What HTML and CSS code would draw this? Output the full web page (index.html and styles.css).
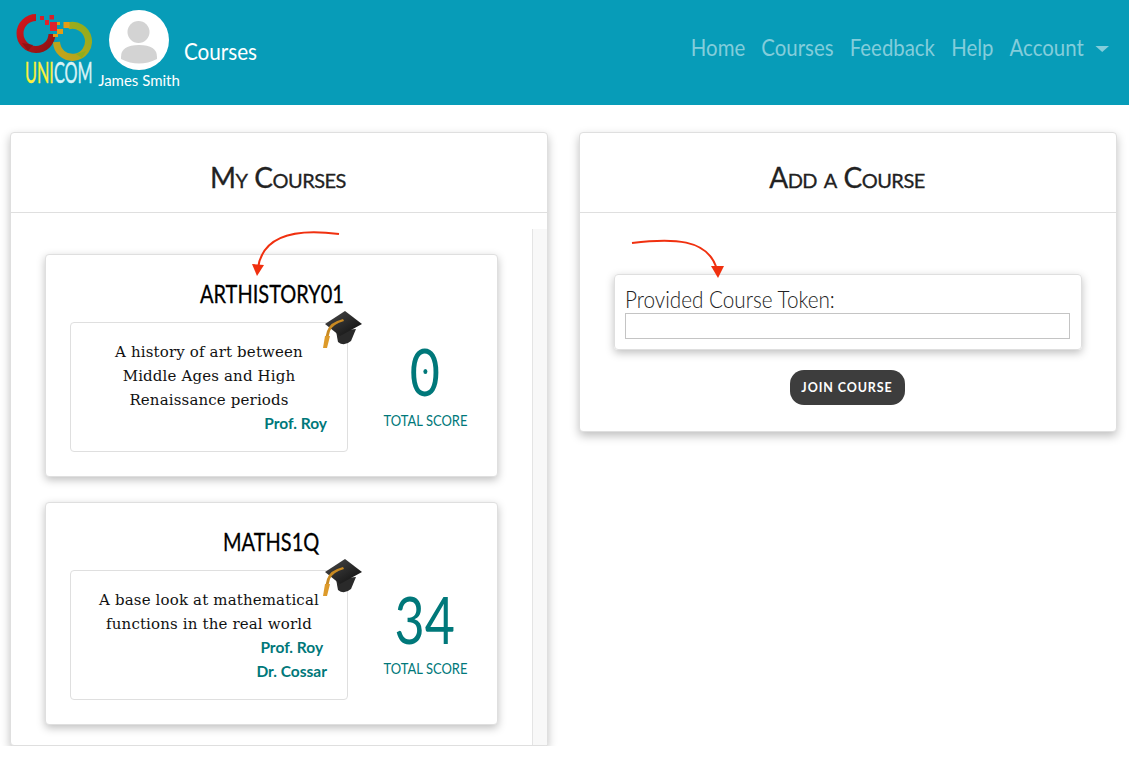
FILE: index.html
```html
<!DOCTYPE html>
<html lang="en">
<head>
    <meta charset="UTF-8">
    <title>Courses</title>
    <link rel="stylesheet" href="styles.css">
</head>
<body>

    <svg class="defs" width="0" height="0">
        <defs>
            <linearGradient id="ring-red" x1="0" y1="0" x2="1" y2="1">
                <stop offset="0" stop-color="#d5161c"/>
                <stop offset="1" stop-color="#8c1414"/>
            </linearGradient>
            <linearGradient id="ring-green" x1="0" y1="1" x2="1" y2="0">
                <stop offset="0" stop-color="#c9a21c"/>
                <stop offset="1" stop-color="#8fae1c"/>
            </linearGradient>
            <linearGradient id="hat-top" x1="0" y1="0" x2="1" y2="1">
                <stop offset="0" stop-color="#4a4a4a"/>
                <stop offset="1" stop-color="#0c0c0c"/>
            </linearGradient>
            <symbol id="hat" viewBox="0 0 40 40">
                <path d="M13 22 L15 33 Q21 38 28 32 L33 20 Z" fill="#2a2a2a"/>
                <path d="M2 15 L22 2 L39 15 L17 27 Z" fill="url(#hat-top)"/>
                <path d="M21 12 Q10 15 7 22 L5 30 L2 30 L4 22 Q7 13 20 10 Z" fill="#c98a22"/>
                <path d="M0 39 L2 27 L7 27 L4 39 Z" fill="#dd9a2a"/>
            </symbol>
        </defs>
    </svg>

    <nav class="navbar">
        <div class="logo">
            <svg width="76" height="50" viewBox="0 0 76 50">
                <path d="M20 4.5 A16 16 0 1 0 36 21" fill="none" stroke="url(#ring-red)" stroke-width="7"/>
                <path d="M6 30 L17 32 L12 38 Z" fill="#8c1414"/>
                <path d="M52 13 A16 16 0 1 1 40.5 29" fill="none" stroke="url(#ring-green)" stroke-width="7"/>
                <path d="M70 38 L60 41 L66 45 Z" fill="#8fae1c"/>
                <rect x="24" y="3" width="4" height="4" fill="#d5202a"/>
                <rect x="33.5" y="2" width="4.5" height="4.5" fill="#d5202a"/>
                <rect x="29" y="7" width="4" height="5" fill="#e0242c"/>
                <rect x="34" y="9" width="7" height="9" fill="#e0242c"/>
                <rect x="41" y="9" width="3" height="3" fill="#e59d14"/>
                <rect x="47.5" y="9" width="6" height="6" fill="#e59d14"/>
                <rect x="41" y="16" width="6" height="5" fill="#e59d14"/>
                <rect x="37" y="21" width="5" height="3" fill="#e59d14"/>
            </svg>
            <div class="logo-text"><span class="logo-uni">UNI</span>COM</div>
        </div>

        <div class="user">
            <div class="avatar">
                <svg width="60" height="60" viewBox="0 0 60 60">
                    <circle cx="30" cy="30" r="30" fill="#fff"/>
                    <circle cx="29.5" cy="22" r="11" fill="#d3d3d3"/>
                    <path d="M12 47 Q12 35 30 35 Q48 35 48 47 L48 49 Q30 58 12 49 Z" fill="#d3d3d3"/>
                </svg>
            </div>
            <div class="user-name">James Smith</div>
        </div>

        <div class="page-title">Courses</div>

        <ul class="nav-links">
            <li>Home</li>
            <li>Courses</li>
            <li>Feedback</li>
            <li>Help</li>
            <li class="dropdown">Account</li>
        </ul>
    </nav>

    <main class="columns">
        <section class="panel panel-courses">
            <h2 class="panel-title">My Courses</h2>
            <div class="scroll-area">
                <div class="course-list">
                    <article class="course">
                        <h3 class="course-code"><span>ARTHISTORY01</span></h3>
                        <div class="course-body">
                            <div class="course-info">
                                <svg class="hat"><use href="#hat"/></svg>
                                <p>A history of art between Middle Ages and High Renaissance periods</p>
                                <div class="teachers">
                                    <div>Prof. Roy</div>
                                </div>
                            </div>
                            <div class="score">
                                <div class="score-value"><span class="score-zero">0</span></div>
                                <div class="score-label">TOTAL SCORE</div>
                            </div>
                        </div>
                    </article>

                    <article class="course">
                        <h3 class="course-code"><span>MATHS1Q</span></h3>
                        <div class="course-body">
                            <div class="course-info">
                                <svg class="hat"><use href="#hat"/></svg>
                                <p>A base look at mathematical functions in the real world</p>
                                <div class="teachers">
                                    <div>Prof. Roy</div>
                                    <div>Dr. Cossar</div>
                                </div>
                            </div>
                            <div class="score">
                                <div class="score-value"><span>34</span></div>
                                <div class="score-label">TOTAL SCORE</div>
                            </div>
                        </div>
                    </article>
                </div>
                <div class="scroll-track"></div>
            </div>
            <svg class="arrow arrow-left" width="90" height="48" viewBox="0 0 90 48">
                <path d="M88 4 C50 -1 12 2 7 38" fill="none" stroke="#f0300f" stroke-width="2"/>
                <path d="M1 34 L13 35 L6 46 Z" fill="#f0300f"/>
            </svg>
        </section>

        <section class="panel panel-add">
            <h2 class="panel-title">Add a Course</h2>
            <div class="add-body">
                <form class="token-box">
                    <label for="token">Provided Course Token:</label>
                    <input type="text" id="token" name="token">
                </form>
                <button class="join-btn" type="button">JOIN COURSE</button>
            </div>
            <svg class="arrow arrow-right" width="95" height="42" viewBox="0 0 95 42">
                <path d="M1 5 C40 0 78 0 86 32" fill="none" stroke="#f0300f" stroke-width="2"/>
                <path d="M80 28 L93 28 L87 40 Z" fill="#f0300f"/>
            </svg>
        </section>
    </main>

</body>
</html>
```

FILE: styles.css
```css
* { box-sizing: border-box; }
body { margin: 0; background: #fff; font-family: "Lato", sans-serif; color: #212529; }
.defs { position: absolute; }

/* top bar */
.navbar { display: flex; align-items: flex-start; height: 105px; background: #079cb8; padding: 13px 20px 0 16px; }
.logo { width: 76px; flex: none; }
.logo svg { display: block; }
.logo-text { width: 112px; margin-left: 9px; margin-top: -3px; font-size: 28px; line-height: 24px; color: #d9f3f6; -webkit-text-stroke: 0.4px #d9f3f6; transform: scaleX(0.58); transform-origin: left; white-space: nowrap; }
.logo-uni { color: #fdf03c; -webkit-text-stroke: 0.4px #fdf03c; }
.user { width: 100px; flex: none; margin: -3px 0 0 -3px; display: flex; flex-direction: column; align-items: center; }
.avatar { height: 60px; }
.avatar svg { display: block; }
.user-name { font-size: 15px; line-height: 20px; color: #fff; white-space: nowrap; }
.page-title { margin: 23px 0 0 -5px; font-size: 24px; line-height: 30px; color: #fff; transform: scaleX(0.86); transform-origin: left; }
.nav-links { display: flex; gap: 19px; list-style: none; margin: 19px 0 0 auto; padding: 0; font-size: 24px; line-height: 30px; color: #83cddb; transform: scaleX(0.85); transform-origin: right; }
.dropdown::after { content: ""; display: inline-block; margin-left: 14px; vertical-align: 4px; border-top: 6px solid #83cddb; border-left: 8px solid transparent; border-right: 8px solid transparent; }

/* panels */
.columns { display: flex; align-items: flex-start; gap: 31px; padding: 27px 12px 0 10px; }
.panel { position: relative; width: 538px; background: #fff; border: 1px solid #dfdfdf; border-radius: 4px; box-shadow: 0 4px 10px rgba(0, 0, 0, 0.25); }
.panel-title { margin: 0; height: 80px; padding-right: 2px; border-bottom: 1px solid #dfdfdf; font-size: 28px; font-weight: 400; font-variant: small-caps; letter-spacing: -0.5px; line-height: 88px; text-align: center; color: #222; -webkit-text-stroke: 0.3px #222; }

.scroll-area { display: flex; align-items: stretch; }
.course-list { width: 521px; padding: 41px 34px 20px 34px; }
.scroll-track { width: 15px; margin-top: 16px; background: #f8f8f8; border-left: 1px solid #e4e4e4; }

.course { height: 223px; margin-bottom: 25px; padding-top: 23px; background: #fff; border: 1px solid #dfdfdf; border-radius: 4px; box-shadow: 0 3px 8px rgba(0, 0, 0, 0.25); }
.course:last-child { margin-bottom: 0; }
.course-code { margin: 0 0 14px 0; font-size: 25px; font-weight: 400; line-height: 30px; text-align: center; color: #000; -webkit-text-stroke: 0.3px #000; }
.course-code span { display: inline-block; transform: scaleX(0.8); }
.course-body { display: flex; align-items: flex-start; padding-left: 24px; }
.course-info { position: relative; width: 278px; height: 130px; padding: 17px 25px 0; border: 1px solid #dfdfdf; border-radius: 4px; }
.course-info p { margin: 0; font-family: "DejaVu Serif", serif; font-size: 15px; letter-spacing: 0.15px; line-height: 24px; text-align: center; color: #111; }
.hat { position: absolute; top: -14px; right: -16px; width: 40px; height: 40px; }
.teachers { width: fit-content; margin: -1px -5px 0 auto; font-size: 15.5px; font-weight: 700; line-height: 24px; text-align: center; color: #00787a; }

.score { width: 84px; margin-left: 35px; text-align: center; color: #00787a; }
.score-value { font-size: 65px; line-height: 70px; margin-top: 14px; }
.score-value span { display: inline-block; transform: scaleX(0.8); }
.score-zero { position: relative; }
.score-zero::after { content: ""; position: absolute; left: 50%; top: 50%; width: 5px; height: 5px; margin: -2px 0 0 -2px; border-radius: 50%; background: #00787a; }
.score-label { width: 105px; margin-top: 4px; font-size: 16px; line-height: 20px; white-space: nowrap; transform: scaleX(0.81); transform-origin: left; }

/* add a course */
.add-body { display: flex; flex-direction: column; align-items: center; padding: 61px 34px 26px 34px; }
.token-box { width: 100%; padding: 11px 11px 10px 10px; border: 1px solid #dfdfdf; border-radius: 4px; box-shadow: 0 3px 8px rgba(0, 0, 0, 0.25); }
.token-box label { display: block; width: 120%; font-size: 23px; font-weight: 300; line-height: 27px; color: #222; transform: scaleX(0.9); transform-origin: left; white-space: nowrap; }
.token-box input { display: block; width: 100%; height: 26px; border: 1px solid #c4c4c4; background: #fff; padding: 0; }
.join-btn { margin: 20px 2px 0 0; width: 115px; height: 35px; padding: 0; border: none; border-radius: 14px; background: #3d3d3d; color: #fff; font-family: "Lato", sans-serif; font-size: 12.5px; font-weight: 700; letter-spacing: 0.9px; }

/* hand drawn arrows on top of the screenshot */
.arrow { position: absolute; }
.arrow-left { left: 240px; top: 97px; }
.arrow-right { left: 51px; top: 105px; }
```
